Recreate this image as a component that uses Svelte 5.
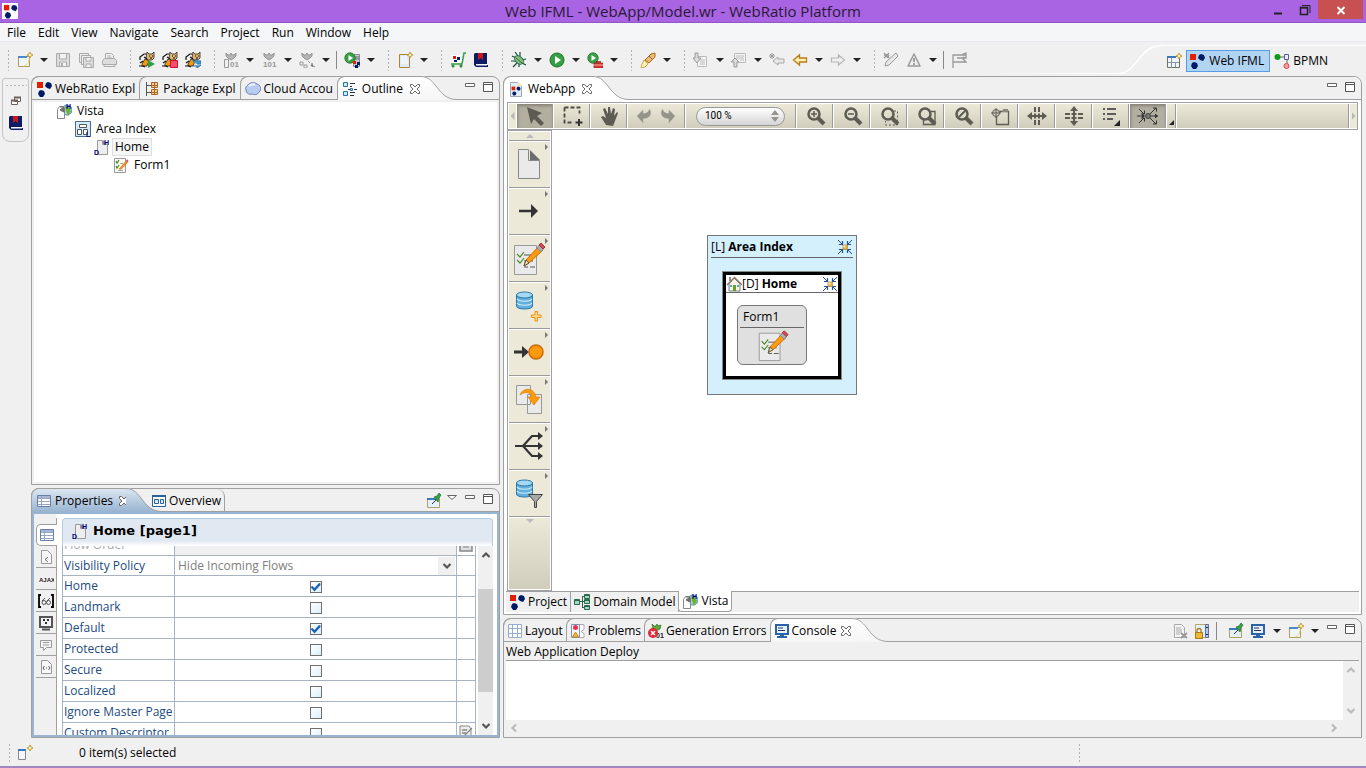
<script lang="ts">
  import { onMount } from 'svelte';

  interface Tool {
    icon: string;
    label: string;
    drop?: boolean;
    sep?: boolean;
  }

  // Shapes shared by several icons
  const dots = (s = 1, x = 0, y = 0) =>
    `<g transform="translate(${x} ${y}) scale(${s})"><path d="M1 1h6v6H1z" fill="#e02000"/><path d="M12 1l3 1 1 3-2 3-3-1-2-2 1-3z" fill="#001a66"/><path d="M5 9l3 1 1 3-2 3-3 0-2-3 1-3z" fill="#001a66"/></g>`;
  const spark = '<path d="M13 0l1 2 2 1-2 1-1 2-1-2-2-1 2-1z" fill="#fff3b0" stroke="#b58a1e" stroke-width=".8"/>';
  const cat =
    '<path d="M8 0l2 2h3l2-2v6l-2 2H9L7 6z" fill="#e0b870" stroke="#222" stroke-width=".8"/><path d="M10 4h1M13 4h1M11 6h2" stroke="#000"/><path d="M3 12l3-5 4 2-2 5H3z" fill="#f59a0c" stroke="#222" stroke-width=".8"/><path d="M1 8V5l4-3h2M0 14h4l2 1M1 11l3-2M5 5l3 2" stroke="#111" stroke-width="1.200" fill="none"/>';
  const gear = '<path d="M3 1l2 2h2l1-2 1 2h2l2-2v3l-2 2-3 2-3-2-2-2z" fill="#b4b4b4" stroke="#949494"/>';
  const num = (t: string, x: number) =>
    `<text x="${x}" y="15" font-family="Liberation Sans" font-size="8" font-weight="bold" fill="#999">${t}</text>`;
  const lens = (inner: string) =>
    `<circle cx="10" cy="9" r="5.5" fill="none" stroke="#5d5b52" stroke-width="2.5"/><path d="M14 13l6 6" stroke="#5d5b52" stroke-width="4"/>${inner}`;
  const pencil =
    '<path d="M14 26l2-6L29 6l4 4-14 13z" fill="#ff9a0c" stroke="#c86d08"/><path d="M14 26l2-6 3 3z" fill="#f5deb0" stroke="#554"/><path d="M27 8l3-4 4 4-3 4z" fill="#a8b0bc" stroke="#888"/><path d="M29 5l2-2 4 4-2 2z" fill="#d84a50" stroke="#a03038"/>';
  const formShape = `<path d="M4.500 5.500h22v29h-22z" fill="#eaeaea" stroke="#999"/><path d="M7 14l3 3 4-5M7 20l3 3 4-5" stroke="#4e8a28" stroke-width="1.200" fill="none"/><path d="M14 15h10M14 21h9M14 27h4M20 27h5" stroke="#555"/>${pencil}`;
  const database =
    '<path d="M3.500 5v11c0 4 16 4 16 0V5z" fill="#62aede" stroke="#2878a8"/><ellipse cx="11.500" cy="5" rx="8" ry="3" fill="#a4d8f4" stroke="#2878a8"/><path d="M4 9c2 3 13 3 15 0M4 13c2 3 13 3 15 0" stroke="#d4effc" fill="none" stroke-width="1.200"/>';
  const pin =
    '<path d="M1.500 5.500h12v9h-12z" fill="#e4f0fa" stroke="#b0a068"/><path d="M1 5h9v2H1z" fill="#3a78b8"/><path d="M6 11l4-4" stroke="#333"/><path d="M8 4l3-1 2-3 2 2-2 3-1 4z" fill="#38a048" stroke="#1c6c2c" stroke-width=".7"/>';
  const monitor =
    '<path d="M2 2h12v9H2z" fill="#e4f0fc" stroke="#2c62a8" stroke-width="2"/><path d="M4 5h5M4 7.500h7" stroke="#335"/><path d="M3 14h10M6 12h4" stroke="#2c62a8" stroke-width="2"/>';
  const globe =
    '<circle cx="11" cy="7" r="5" fill="#a8d0f0" stroke="#4a90b8"/><path d="M9 3l4 1 2 4-3 5-2-5z" fill="#6fb52c"/><path d="M1.500 6.500l2-3h3l2 2v10h-7z" fill="#fff" stroke="#888"/><path d="M4 4h4M4 7l4-3v5z" stroke="#666" fill="#777"/><text x="10" y="6" font-family="Liberation Sans" font-size="7" font-weight="bold" fill="#000080">H</text>';
  const pageShape =
    '<path d="M3.500 1.500h5v4h5v10h-10z" fill="#eee" stroke="#999"/><path d="M9 1l4 4H9z" fill="#888"/><text x="10" y="6" font-family="Liberation Sans" font-size="7" font-weight="bold" fill="#000080">H</text><text x="0" y="16" font-family="Liberation Sans" font-size="7" font-weight="bold" fill="#000080">D</text>';
  const grid = '<path d="M1.500 2.500h13v11h-13z" fill="#fff" stroke="#6880a8"/><path d="M2 3h12v2H2z" fill="#a8b8d4"/><path d="M5.500 3v10M2 5.500h12M2 8.500h12M2 11.500h12" stroke="#98a6c0"/>';
  const window2 = '<path d="M1.500 4.500h11v10h-11z" fill="#eef6fc" stroke="#b09c58"/><path d="M1 4h9v2H1z" fill="#4a8ac8"/>';
  const play = '<circle cx="8" cy="8" r="7" fill="#37a044" stroke="#1d6e2b"/><path d="M6 4l6 4-6 4z" fill="#fff"/>';

  const icons: Record<string, string> = {
    logo: dots(),
    appLogo: `<path d="M0 0h16v16H0z" fill="#fff"/>${dots(0.9, 1, 1)}`,
    newWizard: `${window2}<path d="M12 6c0 5-2 7-5 8" stroke="#f0d070" fill="none"/>${spark}`,
    save: '<path d="M1.500 1.500h13v13h-13z" fill="#ddd" stroke="#aaa"/><path d="M4.500 2v5h7V2M4.500 14v-4h7v4" fill="#f2f2f2" stroke="#aaa"/><path d="M6 11h2v3H6z" fill="#aaa"/>',
    saveAll: '<path d="M1.500 1.500h9v9h-9z" fill="#eee" stroke="#aaa"/><path d="M3.500 3.500h9v9h-9z" fill="#eee" stroke="#aaa"/><path d="M5.500 5.500h10v10h-10z" fill="#ddd" stroke="#aaa"/><path d="M8 6v3h5V6M8 15v-3h5v3" fill="#f2f2f2" stroke="#aaa"/>',
    print: '<path d="M4.500 8V1.500h6l2 2V8" fill="#f4f4f4" stroke="#aaa"/><path d="M1.500 8.500l2-2h10l2 2v4h-14z" fill="#ddd" stroke="#aaa"/><path d="M3 13v1.500h11V13M6 4h4M6 6h5" stroke="#aaa" fill="none"/>',
    catRun: `${cat}<path d="M9 8l7 4-7 4z" fill="#2f9e48"/>`,
    catStop: `${cat}<path d="M8.500 8.500h7v7h-7z" fill="#f0506a" stroke="#d01030"/>`,
    catSync: `${cat}<path d="M8 10l4-3v2h4v3h-4M16 13l-4 3v-2H8" fill="#4a98d0" stroke="#2870a8"/>`,
    gen1: `${gear}<path d="M1.500 7.500h4v8h-4z" fill="none" stroke="#999"/>${num('01', 7)}`,
    gen2: `${gear}${num('101', 2)}`,
    gen3: `${gear}<path d="M1 10h3v3H1zM5 13h3v3H5z" fill="none" stroke="#999"/><path d="M9 9l2 2M12 14l1-3 1 3 2 1" stroke="#999"/>`,
    runServer: `<path d="M9.500 2.500h6v12h-6z" fill="#c8d0c8" stroke="#889"/><path d="M10 5h5M10 7h5" stroke="#667"/><g transform="scale(.75)">${play}</g><path d="M9 9h3v3H9z" fill="#e02000"/><path d="M13 10h3v3h-3zM11 13h3v3h-3z" fill="#001a66"/>`,
    newDoc: `<path d="M2.500 2.500h10v13h-10z" fill="#dcecf8" stroke="#a8843c"/><path d="M4 5h6M4 7h6M4 9h7M4 11h7" stroke="#fff"/>${spark}`,
    cart: '<path d="M1 12h11l2-11h2" fill="none" stroke="#38a048" stroke-width="1.500"/><path d="M1 3h11l-1 8H2z" fill="#fff"/><path d="M3 4h3v3H3z" fill="#e02000"/><path d="M7 5h3v3H7zM4 8h3v2H4z" fill="#001a66"/><circle cx="3" cy="14" r="1.500" fill="#2c8838"/><circle cx="11" cy="14" r="1.500" fill="#2c8838"/>',
    book: '<path d="M2 1h12v11H3v1h12v2H3l-2-2V2z" fill="#0c1c66"/><path d="M5 1h5v7L7.500 6 5 8z" fill="#c81818"/><path d="M3 13h11" stroke="#fff"/>',
    bug: '<path d="M1 4l4 2M4 0l3 4M9 0v4M0 9h5M15 7l-4 1M2 15l4-4M8 15v-4M15 13l-4-2" stroke="#1c4a38" stroke-width="1.200"/><ellipse cx="8" cy="8" rx="5" ry="3.500" transform="rotate(40 8 8)" fill="#8cc070" stroke="#206858"/><path d="M5 6l6 5" stroke="#206858"/>',
    play,
    playExt: `<g transform="scale(.75)">${play}</g><path d="M7 11h9v5H7z" fill="#d83830" stroke="#901818" stroke-width=".6"/><path d="M9 10h5" stroke="#901818" stroke-width="1.500"/><path d="M7 13h9" stroke="#f4b0a0"/>`,
    torch: '<path d="M5 8l6-6 4-1v4l-6 6z" fill="#f4b868" stroke="#a86820"/><path d="M4 8l4 4-3 3-4 1 1-4z" fill="#fff2b0" stroke="#c8a850"/><path d="M9 4l3 3" stroke="#5070a0"/>',
    nextNote: '<path d="M4.500 4.500h9v10h-9z" fill="#f4f4f4" stroke="#bbb"/><path d="M7 8h5M7 10h5M7 12h5" stroke="#bbb"/><path d="M2 1h3v5h3L4 11 0 6h2z" fill="#ddd" stroke="#999"/>',
    prevNote: '<path d="M3.500 1.500h11v9h-11z" fill="#f4f4f4" stroke="#bbb"/><path d="M5 4h8M5 6h8M9 8h4" stroke="#bbb"/><path d="M3 15V10H0l4-4 4 4H6v5z" fill="#ddd" stroke="#999"/>',
    lastEdit: '<path d="M4 9l5-4v2h6v4H9v2z" fill="#e8e8e8" stroke="#aaa"/><path d="M3 1v6M0 4h6M1 2l4 4M5 2L1 6" stroke="#999"/>',
    back: '<path d="M1.500 8l6-5v3h7v4h-7v3z" fill="#fff0b0" stroke="#b87c18" stroke-width="1.300"/>',
    forward: '<path d="M14.500 8l-6-5v3h-7v4h7v3z" fill="#f0f0f0" stroke="#b4b4b4" stroke-width="1.200"/>',
    tools: '<path d="M1 3h5l-1 3zM2 14l1-4L13 1l2 3-9 9z" fill="#e8e8e8" stroke="#999"/><path d="M1 1l5 5M6 1L1 6" stroke="#999" stroke-width="1.300"/>',
    warning: '<path d="M8 2l6 12H2z" fill="#eee" stroke="#999" stroke-width="1.500" stroke-linejoin="round"/><path d="M8 6v4M8 11v2" stroke="#888" stroke-width="1.500"/>',
    flag: '<path d="M2 16V3h13M2 10h8M10 3l5-2v5l-3-1M6 6h9M11 6l4 4h-5" fill="none" stroke="#999" stroke-width="1.300"/>',
    openPersp: `<path d="M1.500 3.500h12v11h-12z" fill="#eef6fc" stroke="#667858"/><path d="M1 4h9" stroke="#3a78b8" stroke-width="2"/><path d="M5.500 5v10M2 9.500h11M9.500 9v5" stroke="#8894a0"/>${spark}`,
    bpmn: '<circle cx="3.500" cy="4" r="3" fill="#0c9a1c"/><path d="M6 4h4M13 7v4" stroke="#666"/><path d="M10.500 1.500h4v5h-4z" fill="#eef" stroke="#5858a0"/><circle cx="12.500" cy="13" r="2.500" fill="#f8a0a0" stroke="#d84850"/>',
    restore: '<path d="M6.500 4.500h6v4h-6zM3.500 7.500h6v4h-6z" fill="#fff" stroke="#6c6058"/><path d="M6 4.500h7M3 7.500h7" stroke="#6c6058" stroke-width="2"/>',
    package: '<path d="M2.500 1v14M3 4.500h4M3 11.500h4" stroke="#555"/><path d="M7.500 1.500h6v5h-6zM7.500 8.500h6v5h-6z" fill="#f4d098" stroke="#a86828"/><path d="M10.500 1v13M7 4.500h7M7 11.500h7" stroke="#a86828"/>',
    cloud: '<path d="M3 4c2-3 7-3 9-1 4 1 5 6 2 8-1 3-5 3-7 2-3 1-6-1-6-4-1-2 0-4 2-5z" fill="#b8ccf0" stroke="#7084b8"/><path d="M4 5c2-2 5-2 6-1" stroke="#f4f8ff" stroke-width="2" fill="none"/>',
    outline: '<path d="M1.500 1.500h4v4h-4zM1.500 10.500h4v4h-4z" fill="#c8e8fc" stroke="#2870b0"/><path d="M8 2.500h5M8 5.500h2M8 11.500h5M8 14.500h4M12 8.500h3M6 8.500h2" stroke="#333"/><path d="M8.500 7.500h2v2h-2z" fill="#b0d8f8" stroke="#2870b0"/>',
    site: globe,
    area: '<path d="M.5.5h15v15H.5z" fill="#d0ecfc" stroke="#506880"/><path d="M4.500 3.500h7v3h-7zM2.500 8.500h4v5h-4zM8.500 8.500h4v5h-4z" fill="#fff" stroke="#555"/><text x="11" y="16" font-family="Liberation Sans" font-size="7" font-weight="bold" fill="#000080">L</text>',
    page: pageShape,
    form: '<path d="M1.500 1.500h11v14h-11z" fill="#f8f8f4" stroke="#999"/><path d="M3 4l1 2 2-3M3 9l1 2 2-3" stroke="#3c8a20" fill="none" stroke-width="1.200"/><path d="M5 13.500h5M7 6.500h3" stroke="#aaa"/><path d="M6 12l7-8 1.500 1.500-6.500 7z" fill="#f49418" stroke="#c8700c" stroke-width=".5"/><path d="M13 4l1-2 1.500 2-1 1.500z" fill="#c85860"/>',
    props: grid,
    overview: '<path d="M1.500 2.500h13v11h-13z" fill="#fff" stroke="#2c6298"/><path d="M1 3h14" stroke="#2c6298" stroke-width="2"/><path d="M3.500 6.500h4v4h-4zM9.500 6.500h3v4h-3z" fill="#d4ecfc" stroke="#2c6298"/>',
    pin,
    tabDoc: '<path d="M3.500 1.500h6l4 4v9h-10z" fill="#f8f8f8" stroke="#999"/><path d="M10 8l-3 2.500 3 2.500" stroke="#777" fill="none"/>',
    tabAjax: '<text x="1" y="11" font-family="Liberation Sans" font-size="6" font-weight="bold" fill="#222">AJAX</text>',
    tabGlasses: '<path d="M3 2H1v12h2M13 2h2v12h-2" stroke="#000" stroke-width="1.800" fill="none"/><circle cx="6" cy="9.500" r="2" fill="none" stroke="#333" stroke-width=".8"/><circle cx="10.500" cy="9.500" r="2" fill="none" stroke="#333" stroke-width=".8"/><path d="M4 8l3-3M9 8l3-3" stroke="#333" stroke-width=".8"/>',
    tabScreen: '<path d="M2 2h12v10H2z" fill="#f4f4f4" stroke="#555" stroke-width="2"/><path d="M5 4h2v2H5zM9 4h2v2H9zM7 7h2v2H7z" fill="#333"/><path d="M4 14.500h8" stroke="#555" stroke-width="2"/>',
    tabNote: '<path d="M2.500 3.500h11v7h-5l-3 3v-3h-3z" fill="#f4f4f4" stroke="#999"/><path d="M5 5.500h6M5 8h6" stroke="#999"/>',
    tabCode: '<path d="M3.500 1.500h6l4 4v9h-10z" fill="#f8f8f8" stroke="#999"/><path d="M6.500 7L5 9l1.500 2M10.500 7L12 9l-1.500 2M8 9h1" stroke="#555" fill="none"/>',
    webapp: `<path d="M2.500 1.500h7l4 4v10h-11z" fill="#e0ecf8" stroke="#a0a8b8"/><path d="M10 1v4h4z" fill="#f4e0a0"/>${dots(0.6, 3, 5)}`,
    domain: '<path d="M.5 5.500h5v5h-5zM10.500.500h5v4h-5zM10.500 5.500h5v4h-5zM10.500 11.500h5v4h-5z" fill="#a8d8c0" stroke="#2c6850"/><path d="M6 7.500h4M8.500 3v10M8 2.500h2M8 13.500h2M1 6.500h5M10 1.500h5M10 6.500h5M10 12.500h5" stroke="#2c6850"/>',
    layout: '<path d="M1.500 1.500h13v13h-13z" fill="#fff" stroke="#98acd0"/><path d="M5.500 2v12M10.500 2v12M2 5.500h12M2 10.500h12" stroke="#98acd0"/>',
    problems: '<path d="M1.500 1.500h8v13h-8z" fill="#f4f4fc" stroke="#8090b8"/><path d="M10 1.500h4v5l-3 2 3 2v4h-4" fill="#fff" stroke="#aab"/><circle cx="5.500" cy="4.500" r="2.500" fill="#e03848"/><path d="M5.500 9l3 5h-6z" fill="#f4b838" stroke="#c88818"/>',
    genErrors: '<path d="M4 1l2 2h2l1-2 1 2 3-1-1 4-4 2-3-2z" fill="#5aac38" stroke="#2c7018" stroke-width=".7"/><text x="8" y="15" font-family="Liberation Sans" font-size="7" font-weight="bold" fill="#222">01</text><circle cx="5" cy="10" r="5" fill="#e02838"/><path d="M3 8l4 4M7 8l-4 4" stroke="#fff" stroke-width="1.500"/>',
    console: monitor,
    clear: '<path d="M2.500 1.500h7l3 3v10h-10z" fill="#f4f4f4" stroke="#aaa"/><path d="M4 5h5M4 7h6M4 9h6M4 11h4" stroke="#aaa"/><path d="M9 10l6 5M15 10l-6 5" stroke="#999" stroke-width="2"/>',
    lock: '<path d="M1.500 1.500h13v13h-13z" fill="#e4f0fa" stroke="#b8a868"/><path d="M11.500 1.500h3v13h-3z" fill="#b8c8e8" stroke="#5870a0"/><path d="M12 4.500h2M12 11.500h2" stroke="#224"/><path d="M1.500 9.500h7v6h-7z" fill="#f0b838" stroke="#a87818"/><path d="M3 9V7c0-2 4-2 4 0v2" stroke="#a87818" fill="none" stroke-width="1.300"/>',
    edit: '<path d="M2 1h9l2 3v11H2z" fill="#eee" stroke="#888"/><path d="M4 5h5M4 8h4M4 11h6M6 11l8-8" stroke="#888" stroke-width="1.300"/>',
    list: '<path d="M2 1h12v13H2zM2 6h12" fill="#ddd" stroke="#888" stroke-width="1.500"/><path d="M5 10h6" stroke="#888"/>',
    fold:
      '<path d="M1 1l4 4M15 1l-4 4M1 15l4-4M15 15l-4-4" stroke="#2050a0"/><path d="M2 5.500h3.500V2M14 5.500h-3.500V2M2 10.500h3.500V14M14 10.500h-3.500V14" fill="none" stroke="#2050a0" stroke-width="1.200"/><path d="M6 6h4.500v4.500H6z" fill="#e0b050" stroke="#b08828" stroke-width=".7"/><path d="M6.500 6.500h2v2h-2z" fill="#fff0c0"/>',
    house: '<path d="M3 8v7h11V8L8 2z" fill="#f8f4e0" stroke="#708090"/><path d="M1 9l7.500-7.500L16 9" stroke="#887468" stroke-width="1.300" fill="none"/><path d="M4 1v4" stroke="#a88070" stroke-width="2"/><path d="M4 9h2v2H4zM11 9h2v2h-2z" fill="#58a0d0"/><path d="M7 9h3v6H7z" fill="#68a030"/>',
    close: '<path d="M3.500 3.500h2L8 6l2.500-2.500h2v2L10 8l2.500 2.500v2h-2L8 10l-2.500 2.500h-2v-2L6 8 3.500 5.500z" fill="#fff" stroke="#666"/>',
    minimize: '<path d="M3.500 2.500h9v3h-9z" fill="#fff" stroke="#666"/>',
    maximize: '<path d="M3.500 1.500h9v9h-9z" fill="#fff" stroke="#555"/><path d="M4 3.500h9" stroke="#555"/>',
    viewMenu: '<path d="M3.500 2.500h9L8 6.500z" fill="#fff" stroke="#666"/>',
    status: `<path d="M1.500 4.500h7v10h-7z" fill="#f4f8fc" stroke="#888"/><path d="M1 5h8" stroke="#3a78b8" stroke-width="2"/>${spark}`,
  };

  // 22px drawings used by the diagram tool strip
  const stripIcons: Record<string, string> = {
    select: '<path d="M3 2l15 6-5 3 7 7-3 3-7-7-3 5z" fill="#5d5b52"/>',
    marquee: '<path d="M3.500 2.500h15v6M3.500 2.500v15h9" fill="none" stroke="#4c4a42" stroke-width="1.800" stroke-dasharray="4 2"/><path d="M18 14v7M14.500 17.500h7" stroke="#333" stroke-width="2"/>',
    hand: '<path d="M8 20L3 12l2-1 3 2-3-9 2-1 3 6V2h2l1 7 2-6 2 1-1 7 3-4 1 1-3 8-2 5z" fill="#5d5b52"/>',
    undo: '<path d="M1 10l7-7v4c5 0 6-2 7-5 4 7-1 11-7 11v5z" fill="#96948a"/>',
    redo: '<path d="M19 10l-7-7v4c-5 0-6-2-7-5-4 7 1 11 7 11v5z" fill="#96948a"/>',
    zoomIn: lens('<path d="M7 9h6M10 6v6" stroke="#5d5b52" stroke-width="1.500"/>'),
    zoomOut: lens('<path d="M7 9h6" stroke="#5d5b52" stroke-width="1.500"/>'),
    zoomSel: lens('<path d="M16 6h3.500v14H7.500v-4" fill="none" stroke="#5d5b52" stroke-dasharray="2 2"/>'),
    zoomPage: lens('<path d="M16 6.500h4v13H8.500V15" fill="none" stroke="#5d5b52" stroke-width="1.300"/>'),
    zoomReset: lens('<path d="M7 12l6-6" stroke="#5d5b52" stroke-width="2"/>'),
    locate: '<path d="M7.500 6.500h12v13h-12z" fill="none" stroke="#5d5b52" stroke-width="1.300"/><path d="M13 7l1-3h5v3" fill="#8c8a7c"/><circle cx="7" cy="8" r="3.500" fill="#d8d5c4" stroke="#5d5b52"/><path d="M7 3v10M2 8h10" stroke="#5d5b52"/>',
    spreadH: '<path d="M9 2v18M13 2v18" stroke="#5d5b52" stroke-width="2" stroke-dasharray="5 1.500"/><path d="M3 11h16" stroke="#5d5b52" stroke-width="2"/><path d="M6 7v8l-5-4zM16 7v8l5-4z" fill="#5d5b52"/>',
    spreadV: '<path d="M2 9h18M2 13h18" stroke="#5d5b52" stroke-width="2" stroke-dasharray="5 1.500"/><path d="M11 3v16" stroke="#5d5b52" stroke-width="2"/><path d="M7 6h8l-4-5zM7 16h8l-4 5z" fill="#5d5b52"/>',
    list: '<path d="M3 4h2M3 9h2M3 14h2M7 4h9M7 9h9M7 14h6" stroke="#333" stroke-width="1.700"/><path d="M20 15v6h-6z" fill="#222"/>',
    links: '<circle cx="11" cy="11" r="2.500" fill="#777" stroke="#444"/><path d="M0 11h7M2 4l5 5M2 18l5-5M13 9l6-6M13 13l6 6M14 11h7" stroke="#333"/><path d="M5 8.500v5L8 11zM18 8.500v5l3-2.500z" fill="#333"/><path d="M16 3h3.500v3.500M16 19h3.500v-3.500M4 9h3.500V5.500M4 13h3.500v3.500" fill="none" stroke="#333"/>',
  };

  // 36px drawings used by the vertical palette
  const paletteIcons: Record<string, string> = {
    page: '<path d="M8.500 3.500h10v11h11v18h-21z" fill="#eaeaea" stroke="#888"/><path d="M20 4l10 10H20z" fill="#6c6c6c"/>',
    flow: '<path d="M9 18h13" stroke="#333" stroke-width="2.500"/><path d="M21 11l7 7-7 7z" fill="#333"/>',
    form: formShape,
    data: `<g transform="translate(3 3)">${database}</g><path d="M25 24.500h2.500v3.500h3.500v2.500h-3.500v3.500H25v-3.500h-3.500V28H25z" fill="#ffd890" stroke="#f09010"/>`,
    event: '<path d="M4 18h9" stroke="#333" stroke-width="3"/><path d="M12 12l7 6-7 6z" fill="#333"/><circle cx="26" cy="18" r="7" fill="#ff9a0c" stroke="#c86808" stroke-width="1.500"/>',
    action: '<path d="M6.500 4.500h14v19h-14zM17.500 13.500h14v19h-14z" fill="#eaeaea" stroke="#999"/><path d="M10 14c3-8 14-8 16 2h4l-6 8-6-8h4c-1-5-7-6-12-2z" fill="#ff9a0c" stroke="#d87c08" stroke-width=".7"/>',
    split: '<path d="M5 18h25M13 18l9-10h8M13 18l9 10h8" fill="none" stroke="#333" stroke-width="2.200"/><path d="M28 4v8l5-4zM28 14v8l5-4zM28 24v8l5-4z" fill="#333"/>',
    filter: `<g transform="translate(3 3)">${database}</g><path d="M18.500 19.500h14l-6 7v6h-2v-6z" fill="#aaa" stroke="#444"/>`,
  };

  const menus = ['File', 'Edit', 'View', 'Navigate', 'Search', 'Project', 'Run', 'Window', 'Help'];

  const toolGroups: Tool[][] = [
    [
      { icon: 'newWizard', label: 'New', drop: true },
      { icon: 'save', label: 'Save' },
      { icon: 'saveAll', label: 'Save All' },
      { icon: 'print', label: 'Print' },
    ],
    [
      { icon: 'catRun', label: 'Start Tomcat' },
      { icon: 'catStop', label: 'Stop Tomcat' },
      { icon: 'catSync', label: 'Restart Tomcat' },
    ],
    [
      { icon: 'gen1', label: 'Generate Full', drop: true },
      { icon: 'gen2', label: 'Generate', drop: true },
      { icon: 'gen3', label: 'Generate Pages', drop: true },
      { icon: 'runServer', label: 'Generate and Run', drop: true, sep: true },
    ],
    [{ icon: 'newDoc', label: 'New Element', drop: true }],
    [
      { icon: 'cart', label: 'Store' },
      { icon: 'book', label: 'Learn' },
    ],
    [
      { icon: 'bug', label: 'Debug', drop: true },
      { icon: 'play', label: 'Run', drop: true },
      { icon: 'playExt', label: 'External Tools', drop: true },
    ],
    [{ icon: 'torch', label: 'Search', drop: true }],
    [
      { icon: 'nextNote', label: 'Next Annotation', drop: true },
      { icon: 'prevNote', label: 'Previous Annotation', drop: true },
      { icon: 'lastEdit', label: 'Last Edit Location' },
      { icon: 'back', label: 'Back', drop: true },
      { icon: 'forward', label: 'Forward', drop: true },
    ],
    [
      { icon: 'tools', label: 'Check' },
      { icon: 'warning', label: 'Warnings', drop: true },
      { icon: 'flag', label: 'Flag', sep: true },
    ],
  ];

  const tree = [
    { icon: 'site', name: 'Vista', level: 0 },
    { icon: 'area', name: 'Area Index', level: 1 },
    { icon: 'page', name: 'Home', level: 2 },
    { icon: 'form', name: 'Form1', level: 3 },
  ];

  const zoomTools = ['zoomIn', 'zoomOut', 'zoomSel', 'zoomPage', 'zoomReset', 'locate', 'spreadH', 'spreadV', 'list'];
  const sideTabs = ['props', 'tabDoc', 'tabAjax', 'tabGlasses', 'tabScreen', 'tabNote', 'tabCode'];

  let flags = $state([
    { name: 'Home', on: true },
    { name: 'Landmark', on: false },
    { name: 'Default', on: true },
    { name: 'Protected', on: false },
    { name: 'Secure', on: false },
    { name: 'Localized', on: false },
    { name: 'Ignore Master Page', on: false },
    { name: 'Custom Descriptor', on: false },
  ]);

  let selected = $state('Home');
  let scroller: HTMLDivElement;

  onMount(() => {
    scroller.scrollTop = 12;
  });
</script>

{#snippet icon(name: string)}
  <svg class="icon" viewBox="0 0 16 16" aria-hidden="true">{@html icons[name]}</svg>
{/snippet}

{#snippet arrow()}
  <svg class="arrow" viewBox="0 0 8 4" aria-hidden="true"><path d="M0 0h8L4 4z" fill="currentColor" /></svg>
{/snippet}

{#snippet chevron(dir: string)}
  <svg class="chevron {dir}" viewBox="0 0 10 10" aria-hidden="true">
    <path d="M1.500 3l3.500 3.500L8.500 3" fill="none" stroke="currentColor" stroke-width="2.200" />
  </svg>
{/snippet}

{#snippet tab(name: string, label: string, active = false, closable = false)}
  <button class="tab" class:active>
    {@render icon(name)}
    <span>{label}</span>
    {#if closable}{@render icon('close')}{/if}
  </button>
  {#if active}
    <svg class="slope" viewBox="0 0 36 24" aria-hidden="true">
      <defs>
        <linearGradient id="slope-{name}" x1="0" y1="0" x2="0" y2="1">
          <stop class="from" offset="0" />
          <stop class="to" offset="1" />
        </linearGradient>
      </defs>
      <path d="M0 0C16 0 16 23 36 23.500V24H0z" fill="url(#slope-{name})" />
      <path d="M0 .5C16 .5 16 23.500 36 23.500" fill="none" stroke="#a0a0a0" />
    </svg>
  {/if}
{/snippet}

{#snippet windowButtons()}
  <button aria-label="Minimize">{@render icon('minimize')}</button>
  <button aria-label="Maximize">{@render icon('maximize')}</button>
{/snippet}

{#snippet stripTool(name: string, pressed = false)}
  <button class="cell" class:pressed aria-label={name}>
    <svg viewBox="0 0 22 22" aria-hidden="true">{@html stripIcons[name]}</svg>
  </button>
{/snippet}

<div class="app">
  <header class="titlebar">
    <span class="app-icon">{@render icon('appLogo')}</span>
    <h1>Web IFML - WebApp/Model.wr - WebRatio Platform</h1>
    <div class="window-controls">
      <button aria-label="Minimize window"><svg viewBox="0 0 12 12"><path d="M2 9.500h8" stroke="#222" stroke-width="2" /></svg></button>
      <button aria-label="Restore window">
        <svg viewBox="0 0 12 12"><path d="M1.500 3.500h7v7h-7z" fill="none" stroke="#222" stroke-width="1.500" /><path d="M3 1.500h8V9M1 4h8" fill="none" stroke="#222" /></svg>
      </button>
      <button class="close" aria-label="Close window"><svg viewBox="0 0 12 12"><path d="M2.500 3l7 7M9.500 3l-7 7" stroke="#fff" stroke-width="2" /></svg></button>
    </div>
  </header>

  <nav class="menubar">
    {#each menus as menu}
      <button>{menu}</button>
    {/each}
  </nav>

  <div class="toolbar">
    {#each toolGroups as group}
      <div class="tool-group">
        {#each group as tool}
          {#if tool.sep}<span class="sep"></span>{/if}
          <button aria-label={tool.label}>{@render icon(tool.icon)}</button>
          {#if tool.drop}<button class="drop" aria-label="{tool.label} menu">{@render arrow()}</button>{/if}
        {/each}
      </div>
    {/each}
    <span class="rail"></span>
    <svg class="rail-curve" viewBox="0 0 44 34" aria-hidden="true">
      <path d="M0 31.500C20 31 20 4 44 3.500" fill="none" stroke="#fff" stroke-width="1.500" />
    </svg>
    <div class="perspectives">
      <button aria-label="Open Perspective">{@render icon('openPersp')}</button>
      <button class="perspective current">{@render icon('logo')}<span>Web IFML</span></button>
      <button class="perspective">{@render icon('bpmn')}<span>BPMN</span></button>
    </div>
  </div>

  <main>
    <aside class="trim">
      <span class="trim-grip"></span>
      <button aria-label="Restore">{@render icon('restore')}</button>
      <button aria-label="Learn">{@render icon('book')}</button>
    </aside>

    <div class="left">
      <section class="panel outline">
        <div class="tabs">
          {@render tab('logo', 'WebRatio Expl')}
          {@render tab('package', 'Package Expl')}
          {@render tab('cloud', 'Cloud Accou')}
          {@render tab('outline', 'Outline', true, true)}
          <div class="tab-tools">{@render windowButtons()}</div>
        </div>
        <ul class="tree">
          {#each tree as node}
            <li style="--level: {node.level}">
              {@render icon(node.icon)}
              <button class:selected={selected === node.name} onclick={() => (selected = node.name)}>{node.name}</button>
            </li>
          {/each}
        </ul>
      </section>

      <section class="panel properties">
        <div class="tabs">
          {@render tab('props', 'Properties', true, true)}
          {@render tab('overview', 'Overview')}
          <div class="tab-tools">
            <button aria-label="Pin">{@render icon('pin')}</button>
            <button aria-label="View Menu">{@render icon('viewMenu')}</button>
            {@render windowButtons()}
          </div>
        </div>
        <div class="props-body">
          <div class="side-tabs">
            {#each sideTabs as name, i}
              <button class:current={i === 0} aria-label={name}>{@render icon(name)}</button>
            {/each}
          </div>
          <div class="props-main">
            <h2>{@render icon('page')}<span>Home [page1]</span></h2>
            <div class="props-scroll">
              <div class="props-clip" bind:this={scroller}>
                <table>
                  <tbody>
                    <tr class="muted">
                      <th scope="row">Flow Order</th>
                      <td></td>
                      <td>{@render icon('list')}</td>
                    </tr>
                    <tr class="short">
                      <th scope="row"><label for="visibility">Visibility Policy</label></th>
                      <td>
                        <div class="combo">
                          <select id="visibility"><option>Hide Incoming Flows</option></select>
                          <span>{@render chevron('down')}</span>
                        </div>
                      </td>
                      <td></td>
                    </tr>
                    {#each flags as flag, i}
                      <tr>
                        <th scope="row"><label for="flag-{i}">{flag.name}</label></th>
                        <td class="check"><input id="flag-{i}" type="checkbox" bind:checked={flag.on} /></td>
                        <td>{#if i === flags.length - 1}{@render icon('edit')}{/if}</td>
                      </tr>
                    {/each}
                  </tbody>
                </table>
              </div>
              <div class="scrollbar">
                {@render chevron('up')}
                <span class="thumb"></span>
                {@render chevron('down')}
              </div>
            </div>
          </div>
        </div>
      </section>
    </div>

    <div class="right">
      <section class="panel editor">
        <div class="tabs">
          {@render tab('webapp', 'WebApp', true, true)}
          <div class="tab-tools">{@render windowButtons()}</div>
        </div>
        <div class="strip">
          <span class="strip-end left-end"></span>
          {@render stripTool('select', true)}
          {@render stripTool('marquee')}
          {@render stripTool('hand')}
          <div class="cell history">
            <button aria-label="Undo"><svg viewBox="0 0 20 20">{@html stripIcons.undo}</svg></button>
            <button aria-label="Redo"><svg viewBox="0 0 20 20">{@html stripIcons.redo}</svg></button>
          </div>
          <div class="cell zoom">
            <div class="zoom-box">
              <select aria-label="Zoom"><option>100 %</option></select>
              <svg viewBox="0 0 8 12" aria-hidden="true"><path d="M0 5l4-5 4 5zM0 7h8l-4 5z" fill="#96948c" /></svg>
            </div>
          </div>
          {#each zoomTools as name}
            {@render stripTool(name)}
          {/each}
          {@render stripTool('links', true)}
          <button class="cell corner" aria-label="Link options"><svg viewBox="0 0 6 6"><path d="M6 0v6H0z" fill="#222" /></svg></button>
          <span class="cell filler"></span>
          <span class="strip-end right-end"></span>
        </div>
        <div class="work">
          <div class="palette">
            <span class="palette-end"><svg viewBox="0 0 8 4"><path d="M0 4h8L4 0z" fill="#bbb" /></svg></span>
            {#each Object.keys(paletteIcons) as name}
              <button aria-label={name}>
                <svg viewBox="0 0 36 36">{@html paletteIcons[name]}</svg>
                <span class="more"></span>
              </button>
            {/each}
            <span class="palette-fill"><svg viewBox="0 0 8 4"><path d="M0 0h8L4 4z" fill="#bbb" /></svg></span>
          </div>
          <div class="canvas">
            <div class="area-node">
              <div class="node-title"><span>[L] <b>Area Index</b></span>{@render icon('fold')}</div>
              <div class="page-node">
                <div class="node-title">{@render icon('house')}<span>[D] <b>Home</b></span>{@render icon('fold')}</div>
                <div class="form-node">
                  <span>Form1</span>
                  <svg viewBox="0 0 36 36" aria-hidden="true">{@html formShape}</svg>
                </div>
              </div>
            </div>
          </div>
        </div>
        <div class="pages">
          <button>{@render icon('logo')}Project</button>
          <button>{@render icon('domain')}Domain Model</button>
          <button class="current">{@render icon('site')}Vista</button>
        </div>
      </section>

      <section class="panel console">
        <div class="tabs">
          {@render tab('layout', 'Layout')}
          {@render tab('problems', 'Problems')}
          {@render tab('genErrors', 'Generation Errors')}
          {@render tab('console', 'Console', true, true)}
          <div class="tab-tools">
            <button aria-label="Clear Console">{@render icon('clear')}</button>
            <button aria-label="Scroll Lock">{@render icon('lock')}</button>
            <span class="sep"></span>
            <button aria-label="Pin Console">{@render icon('pin')}</button>
            <button aria-label="Display Console">{@render icon('console')}</button>
            <button class="drop" aria-label="Display Console menu">{@render arrow()}</button>
            <button aria-label="Open Console">{@render icon('newWizard')}</button>
            <button class="drop" aria-label="Open Console menu">{@render arrow()}</button>
            {@render windowButtons()}
          </div>
        </div>
        <p>Web Application Deploy</p>
        <div class="output">
          <div class="output-row">
            <div class="log"></div>
            <div class="bar-v">{@render chevron('up')}{@render chevron('down')}</div>
          </div>
          <div class="bar-h">{@render chevron('prev')}{@render chevron('next')}</div>
        </div>
      </section>
    </div>
  </main>

  <footer>
    <span class="dots"></span>
    {@render icon('status')}
    <span class="message">0 item(s) selected</span>
    <span class="dots"></span>
  </footer>
</div>

<style>
  :global(body) {
    margin: 0;
  }

  .app {
    display: flex;
    flex-direction: column;
    min-height: 100vh;
    box-sizing: border-box;
    border-bottom: 2px solid #a386bd;
    background: #f0f0f0;
    color: #000;
    font: 12px/16px "Open Sans", "Noto Sans", sans-serif;
  }

  .app :global(*) {
    box-sizing: border-box;
  }

  button,
  select {
    margin: 0;
    padding: 0;
    border: 0;
    background: none;
    color: inherit;
    font: inherit;
  }

  svg {
    display: block;
    flex: none;
  }

  .icon {
    width: 16px;
    height: 16px;
  }

  .arrow {
    width: 8px;
    height: 4px;
    color: #222;
  }

  .chevron {
    width: 10px;
    height: 10px;
  }

  .up {
    transform: rotate(180deg);
  }

  .prev {
    transform: rotate(90deg);
  }

  .next {
    transform: rotate(-90deg);
  }

  .sep {
    width: 1px;
    height: 18px;
    margin: 0 3px;
    background: #888;
  }

  /* Window frame */
  .titlebar {
    display: grid;
    grid-template-columns: 1fr auto 1fr;
    height: 23px;
    border-bottom: 1px solid #9156c4;
    background: #a864e2;
  }

  .app-icon {
    padding: 3px 2px;
  }

  h1 {
    margin: 0;
    color: #2a1838;
    font-size: 15px;
    font-weight: 400;
    line-height: 22px;
  }

  .window-controls {
    display: flex;
    justify-content: flex-end;
    padding-right: 3px;
  }

  .window-controls button {
    display: grid;
    place-items: center;
    width: 27px;
    height: 19px;
  }

  .window-controls .close {
    width: 45px;
    background: #c75050;
  }

  .window-controls svg {
    width: 12px;
    height: 12px;
  }

  .menubar {
    display: flex;
    gap: 12px;
    height: 19px;
    padding: 0 7px;
    border-bottom: 1px solid #e8e9ec;
    background: #f5f6f8;
  }

  .menubar button {
    line-height: 20px;
  }

  .toolbar {
    display: flex;
    align-items: center;
    height: 34px;
    padding: 2px 0 0 7px;
  }

  .tool-group {
    display: flex;
    align-items: center;
    height: 22px;
    margin-right: 9px;
    padding-left: 6px;
    background: radial-gradient(circle, #b4b4b4 1px, transparent 1px) 0 0 / 3px 4px repeat-y;
  }

  .tool-group button,
  .tab-tools button {
    display: grid;
    place-items: center;
    width: 23px;
    height: 20px;
  }

  .tool-group .drop {
    width: 15px;
  }

  .rail {
    flex: 1;
    align-self: flex-end;
    height: 1px;
    margin-bottom: 2px;
    background: linear-gradient(90deg, #f0f0f0, #fff);
  }

  .rail-curve {
    align-self: flex-end;
    width: 44px;
    height: 34px;
  }

  .perspectives {
    display: flex;
    align-items: center;
    gap: 4px;
    align-self: flex-start;
    height: 30px;
    margin-top: 1px;
    padding: 0 38px 0 4px;
    border-top: 1px solid #fff;
  }

  .perspective {
    display: flex;
    align-items: center;
    gap: 3px;
    height: 22px;
  }

  .perspective.current {
    gap: 4px;
    padding: 0 5px 0 2px;
    border: 1px solid #569de5;
    background: #b2d4f3;
  }

  main {
    display: grid;
    grid-template-columns: 31px 469px minmax(0, 1fr);
    flex: 1;
    padding-right: 4px;
  }

  .trim {
    display: flex;
    flex-direction: column;
    align-items: center;
    align-self: start;
    gap: 6px;
    width: 27px;
    margin: 2px 0 0 2px;
    padding: 5px 0 10px;
    border: 1px solid #c4c4c4;
    border-radius: 3px 3px 8px 8px;
  }

  .trim-grip {
    width: 22px;
    height: 3px;
    background: radial-gradient(circle, #b4b4b4 1px, transparent 1px) 0 0 / 4px 3px repeat-x;
  }

  .left,
  .right {
    display: flex;
    flex-direction: column;
    gap: 3px;
  }

  .right {
    margin-left: 3px;
  }

  /* Tabbed views */
  .panel {
    display: flex;
    flex-direction: column;
    border: 1px solid #a0a0a0;
    border-radius: 8px 8px 0 0;
    background: #f0f0f0;
    --tab-top: #fff;
    --tab-bottom: #f6f6f6;
  }

  .tabs {
    display: flex;
    height: 23px;
    background: linear-gradient(#a0a0a0, #a0a0a0) bottom / 100% 1px no-repeat;
  }

  .tab {
    display: flex;
    align-items: center;
    gap: 3px;
    margin-top: -1px;
    padding: 0 4px;
    border: solid #a0a0a0;
    border-width: 1px 0 0 1px;
    border-top-left-radius: 8px;
    white-space: nowrap;
  }

  .tab:first-child {
    margin-left: -1px;
  }

  .tab.active {
    gap: 4px;
    padding-right: 0;
    background: linear-gradient(var(--tab-top), var(--tab-bottom));
  }

  .slope {
    width: 36px;
    height: 24px;
    margin: -1px 0 0 -2px;
  }

  .slope .from {
    stop-color: var(--tab-top);
  }

  .slope .to {
    stop-color: var(--tab-bottom);
  }

  .tab-tools {
    display: flex;
    align-items: center;
    margin-left: auto;
    padding-right: 2px;
  }

  .tab-tools button {
    width: 18px;
  }

  .outline {
    flex: 1;
  }

  .tree {
    flex: 1;
    margin: 2px;
    padding: 0 0 0 22px;
    background: #fff;
    list-style: none;
  }

  .tree li {
    display: flex;
    align-items: center;
    gap: 2px;
    height: 18px;
    padding-left: calc(var(--level) * 19px);
  }

  .tree button {
    height: 18px;
    padding: 0 2px;
    border: 1px solid transparent;
    line-height: 16px;
  }

  .tree .selected {
    border-color: #dedede;
    background: #f6f6f6;
  }

  .properties {
    --tab-top: #dce6f1;
    --tab-bottom: #99b4d1;
  }

  .properties .tab.active {
    gap: 3px;
  }

  .properties .slope {
    margin-left: -6px;
    margin-right: -12px;
  }

  .properties .slope + :global(.tab) {
    gap: 2px;
    margin-top: 0;
    padding: 0 3px 0 1px;
    border-width: 0 1px 0 0;
    border-radius: 0 8px 0 0;
  }

  .props-body {
    display: flex;
    padding-top: 4px;
    border: 2px solid #99b4d1;
    background: linear-gradient(90deg, #f0f0f0 22px, #fff 22px);
  }

  .side-tabs {
    display: flex;
    flex-direction: column;
    width: 23px;
    padding-top: 6px;
    border-right: 1px solid #a0a0a0;
  }

  .side-tabs button {
    display: grid;
    place-items: center;
    height: 22px;
    margin-left: 2px;
    border-bottom: 1px solid #a0a0a0;
  }

  .side-tabs .current {
    margin-right: -1px;
    border: 1px solid #a0a0a0;
    border-right: 0;
    border-radius: 5px 0 0 5px;
    background: #fff;
  }

  .props-main {
    flex: 1;
    min-width: 0;
    padding: 0 4px 0 5px;
  }

  h2 {
    display: flex;
    align-items: center;
    gap: 5px;
    height: 28px;
    margin: 0;
    padding: 0 0 4px 9px;
    border: 1px solid #b4cbe2;
    border-bottom: 0;
    border-radius: 4px 4px 0 0;
    background: linear-gradient(#e0e8f2 80%, #fff);
    font: bold 13px/20px "DejaVu Sans", sans-serif;
  }

  .props-scroll {
    display: flex;
    height: 189px;
  }

  .props-clip {
    flex: 1;
    overflow: hidden;
  }

  table {
    width: 100%;
    border-collapse: collapse;
    table-layout: fixed;
  }

  th,
  td {
    height: 21px;
    padding: 0 1px;
    border: 1px solid #a8b4c2;
    text-align: left;
  }

  .short > * {
    height: 20px;
  }

  th {
    width: 112px;
    color: #1c4a80;
    font-weight: 400;
    line-height: 18px;
    white-space: nowrap;
  }

  td:last-child {
    width: 19px;
  }

  .muted th {
    color: #a8a8a8;
  }

  .muted td:nth-child(2) {
    background: #f0f0f0;
  }

  .combo {
    display: flex;
    height: 18px;
  }

  .combo select {
    flex: 1;
    padding-left: 2px;
    appearance: none;
    color: #808080;
    line-height: 18px;
  }

  .combo span {
    display: grid;
    place-items: center;
    width: 17px;
    background: #f0f0f0;
    color: #555;
  }

  .check {
    text-align: center;
  }

  .check input {
    display: block;
    width: 12px;
    height: 12px;
    margin: 2px auto 0;
    border: 1px solid #707070;
    appearance: none;
    background: linear-gradient(135deg, #fff, #dcf0fc);
  }

  .check input:checked::after {
    content: "";
    display: block;
    width: 10px;
    height: 10px;
    background: #1c62b8;
    clip-path: polygon(0 50%, 20% 40%, 40% 60%, 85% 10%, 100% 15%, 100% 30%, 40% 95%);
  }

  .scrollbar {
    display: flex;
    flex-direction: column;
    align-items: center;
    width: 15px;
    margin-left: 2px;
    padding: 4px 0;
    background: #f0f0f0;
    color: #555;
  }

  .thumb {
    width: 15px;
    height: 103px;
    margin: 29px 0 auto;
    background: #cdcdcd;
  }

  /* Diagram editor */
  .editor {
    flex: 1;
    background: #fff;
    --tab-bottom: #fff;
  }

  .editor .tabs {
    background-color: #f0f0f0;
    border-radius: 8px 8px 0 0;
  }

  .strip {
    display: flex;
    gap: 2px;
    height: 28px;
    margin: 2px 3px 0;
    padding: 1px;
    border: 1px solid #a0a0a8;
    background: #fff;
  }

  .strip-end {
    display: grid;
    place-items: center;
    width: 7px;
    margin-right: -1px;
    background: #ece9d8;
  }

  .strip-end::after,
  .more {
    width: 4px;
    height: 8px;
    background: #b8b8b8;
    content: "";
    clip-path: polygon(0 0, 100% 50%, 0 100%);
  }

  .left-end::after {
    clip-path: polygon(100% 0, 0 50%, 100% 100%);
  }

  .cell {
    display: grid;
    place-items: center;
    flex: none;
    width: 35px;
    background: linear-gradient(#ece9d8, #d0cdbc);
    box-shadow: 1px 0 #9a9a9a;
  }

  .cell svg {
    width: 22px;
    height: 22px;
  }

  .cell.pressed {
    background: #b2aea0;
    box-shadow: 1px 0 #9a9a9a, inset 1px 2px 3px #888478;
  }

  .cell.history {
    display: flex;
    justify-content: center;
    align-items: center;
    gap: 4px;
    width: 56px;
  }

  .cell.history svg {
    width: 18px;
    height: 20px;
  }

  .cell.zoom {
    width: 109px;
  }

  .zoom-box {
    display: flex;
    align-items: center;
    width: 89px;
    height: 19px;
    padding: 0 5px 0 8px;
    border: 1px solid #999;
    border-radius: 10px;
    background: linear-gradient(#fff, #d4d4d4);
  }

  .zoom-box select {
    flex: 1;
    appearance: none;
    font: 10px/16px Roboto, sans-serif;
  }

  .cell .zoom-box svg {
    width: 8px;
    height: 12px;
  }

  .cell.corner {
    place-items: end center;
    width: 8px;
    padding-bottom: 3px;
  }

  .cell.corner svg {
    width: 5px;
    height: 5px;
  }

  .cell.filler {
    flex: 1;
  }

  .work {
    display: flex;
    flex: 1;
  }

  .palette {
    display: flex;
    flex-direction: column;
    gap: 1px;
    width: 45px;
    margin-left: 3px;
    padding: 1px;
    border: 1px solid #a0a0a8;
  }

  .palette > * {
    border-bottom: 1px solid #9a9a9a;
    background: #ece9d8;
  }

  .palette-end {
    display: grid;
    place-items: center;
    height: 9px;
  }

  .palette button {
    display: flex;
    align-items: center;
    height: 46px;
    padding: 0 0 2px 1px;
  }

  .palette button svg {
    width: 36px;
    height: 36px;
  }

  .palette .more {
    align-self: flex-start;
    height: 6px;
    width: 3px;
    margin: 2px 0 0 -1px;
    background: #777;
  }

  .palette-end svg,
  .palette-fill svg {
    width: 8px;
    height: 4px;
  }

  .palette-fill {
    display: flex;
    justify-content: center;
    flex: 1;
    padding-top: 1px;
    border: 0;
    background: linear-gradient(#ece9d8, #d0cdbc);
  }

  .canvas {
    position: relative;
    flex: 1;
  }

  .area-node {
    position: absolute;
    top: 105px;
    left: 155px;
    width: 150px;
    height: 160px;
    padding: 0 3px;
    border: 1px solid #777;
    background: #d4f0fd;
  }

  .node-title {
    display: flex;
    align-items: center;
    height: 22px;
    border-bottom: 1px solid #666;
  }

  .node-title .icon:last-child {
    margin-left: auto;
  }

  .page-node {
    width: 120px;
    height: 109px;
    margin: 13px 0 0 11px;
    border: 4px solid #000;
    outline: 1px solid #888;
    outline-offset: -1px;
    background: #fff;
  }

  .page-node .node-title {
    height: 18px;
  }

  .form-node {
    display: flex;
    flex-direction: column;
    align-items: center;
    width: 70px;
    height: 60px;
    margin: 12px 0 0 11px;
    padding: 0 2px;
    border: 1px solid #777;
    border-radius: 6px;
    background: #e0e0e0;
  }

  .form-node span {
    width: 100%;
    padding: 3px 3px 2px;
    border-bottom: 1px solid #666;
  }

  .form-node svg {
    width: 36px;
    height: 34px;
  }

  .pages {
    display: flex;
    height: 21px;
    margin: 0 2px 2px;
    border-top: 1px solid #a0a0a0;
    background: #f0f0f0;
  }

  .pages button {
    display: flex;
    align-items: center;
    gap: 3px;
    padding: 0 3px;
    border-right: 1px solid #a0a0a0;
  }

  .pages .current {
    margin: -1px 0 0 -1px;
    border: solid #a0a0a0;
    border-width: 0 1px 1px;
    border-radius: 0 0 4px 4px;
    background: #fff;
  }

  /* Console */
  .console .tab {
    gap: 2px;
    padding: 0 3px;
  }

  .console .tab.active {
    padding-right: 0;
  }

  .console .sep {
    margin: 0 8px 0 3px;
  }

  .console .tab-tools button {
    width: 22px;
  }

  .console .tab-tools .drop {
    width: 16px;
  }

  .console .tab-tools button:nth-last-child(-n + 2) {
    width: 18px;
  }

  .console p {
    margin: 0 2px;
    padding-top: 2px;
    border-bottom: 1px solid #a0a0a0;
  }

  .output {
    margin: 0 2px 1px;
    color: #bbb;
  }

  .output-row {
    display: flex;
    height: 59px;
  }

  .log {
    flex: 1;
    background: #fff;
  }

  .bar-v,
  .bar-h {
    display: flex;
    align-items: center;
    justify-content: space-between;
  }

  .bar-v {
    flex-direction: column;
    width: 16px;
    padding: 4px 0;
  }

  .bar-h {
    height: 16px;
    padding: 0 20px 0 3px;
  }

  footer {
    display: flex;
    align-items: center;
    height: 28px;
    padding: 2px 0 0 8px;
  }

  footer .icon {
    margin-left: 6px;
  }

  .message {
    padding-left: 46px;
  }

  .dots {
    width: 3px;
    height: 20px;
    background: radial-gradient(circle, #b4b4b4 1px, transparent 1px) 0 0 / 3px 4px repeat-y;
  }

  .message + .dots {
    margin: 0 285px 0 auto;
  }
</style>
